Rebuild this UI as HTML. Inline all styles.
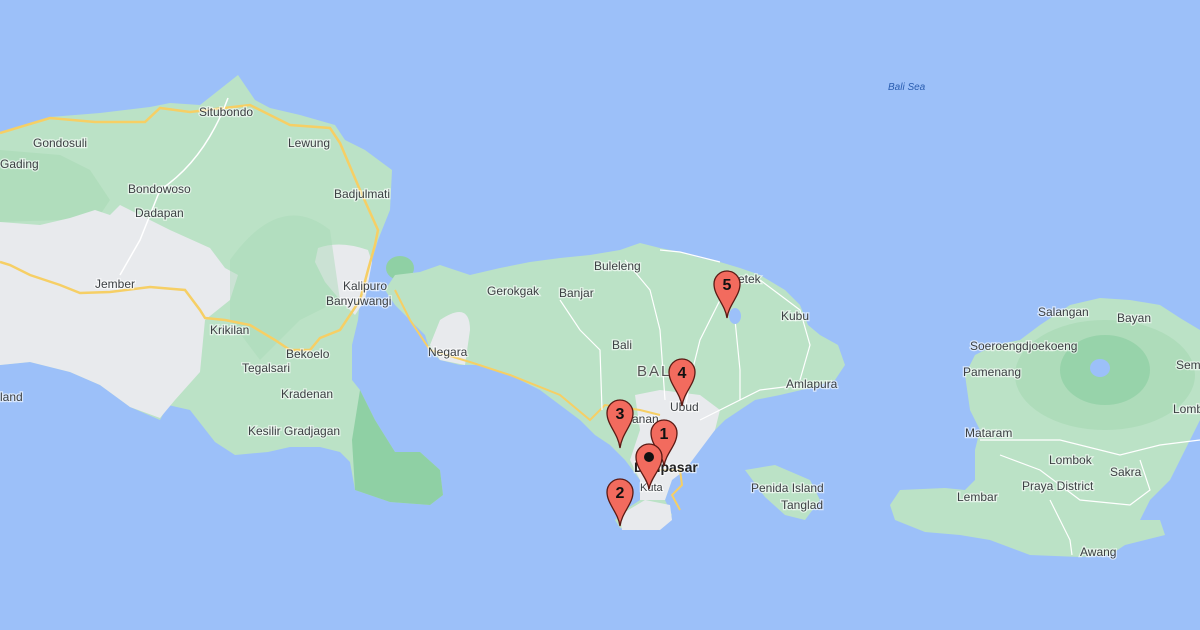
<!DOCTYPE html>
<html><head><meta charset="utf-8"><style>
html,body{margin:0;padding:0;width:1200px;height:630px;overflow:hidden;background:#9cc0f9}
svg{display:block}
text{font-family:"Liberation Sans",sans-serif;font-size:12px;fill:#3c4043;paint-order:stroke;stroke:#fff;stroke-width:2.5px;stroke-opacity:.6}
.pin text{font-weight:bold;font-size:16px;fill:#111;stroke:none}
</style></head><body>
<svg width="1200" height="630" viewBox="0 0 1200 630">
<rect width="1200" height="630" fill="#9cc0f9"/>
<!-- Java -->
<path d="M0,132 L50,117 100,113 150,107 170,103 200,105 238,75 255,100 270,108 300,115 335,125 345,140 365,150 392,170 390,210 378,240 372,260 368,280 360,300 358,320 352,345 352,380 360,390 375,420 395,452 420,452 440,470 443,495 430,505 390,502 355,490 350,462 340,452 320,447 290,447 268,452 235,455 215,442 190,410 168,405 160,420 130,407 100,385 70,372 30,362 0,365Z" fill="#bbe2c6"/>
<path d="M0,150 L60,155 90,170 110,200 100,215 60,220 0,222Z" fill="#a8dab5" opacity=".6"/>
<path d="M0,222 L40,225 70,218 95,210 110,215 120,205 140,215 170,230 210,248 225,268 238,275 230,300 205,320 200,372 175,400 160,418 130,407 100,385 70,372 30,362 0,365Z" fill="#e8eaed"/>
<path d="M318,248 Q340,240 368,250 L372,262 365,300 355,315 340,300 325,282 315,262Z" fill="#e8eaed"/>
<path d="M230,260 Q280,190 330,230 L340,300 300,320 260,360 230,320Z" fill="#a8dab5" opacity=".45"/>
<path d="M360,390 375,420 395,452 420,452 440,470 443,495 430,505 390,502 355,490 352,440Z" fill="#8fd0a4"/>
<ellipse cx="400" cy="268" rx="14" ry="12" fill="#8fd0a4"/>
<!-- roads Java -->
<path d="M0,133 L50,118 95,122 145,122 160,108 190,112 250,105 290,125 330,128 340,143 360,190 378,230 375,245 368,270 360,300 340,330 320,338 310,350 290,350 275,340 250,325 225,320 205,318 200,310 185,290 150,287 110,292 80,293 60,285 30,275 10,265 0,262" fill="none" stroke="#f6cf65" stroke-width="2.5"/>
<path d="M228,98 Q205,160 160,190 L140,240 120,275" fill="none" stroke="#fff" stroke-width="1.5"/>
<!-- Bali -->
<path d="M385,290 L395,275 420,272 440,265 470,275 500,268 530,262 560,258 590,255 620,250 640,243 660,248 680,252 700,258 720,262 740,268 760,275 785,290 800,305 808,325 820,335 838,345 845,365 835,380 810,388 780,395 755,400 725,420 705,440 690,455 680,470 672,480 665,500 672,515 665,525 640,530 620,528 615,520 625,510 640,500 640,480 625,460 610,445 595,435 580,420 560,405 540,390 510,375 480,365 460,365 440,360 430,350 425,335 410,320 395,305Z" fill="#bbe2c6"/>
<path d="M440,320 Q470,300 470,330 L465,365 440,360 430,345Z" fill="#e8eaed"/>
<path d="M635,395 L660,390 700,395 720,410 715,430 700,450 685,470 672,480 665,500 640,500 640,480 630,460 640,430Z" fill="#e8eaed"/>
<path d="M620,515 L645,500 670,505 672,520 660,530 622,530Z" fill="#e8eaed"/>
<path d="M395,290 L410,320 430,350 470,362 510,375 560,395 590,420 605,405 640,410 660,415" fill="none" stroke="#f6cf65" stroke-width="2"/>
<path d="M650,470 L680,470 682,485 672,495 680,510" fill="none" stroke="#f6cf65" stroke-width="2"/>
<g fill="none" stroke="#fff" stroke-width="1.2">
<path d="M560,300 L580,330 600,350 602,410"/><path d="M625,260 L650,290 660,330 665,400"/>
<path d="M730,270 L720,300 700,340 690,380 685,410"/><path d="M735,320 L740,370 740,400"/>
<path d="M760,280 L800,310 810,345 800,380"/><path d="M660,250 L680,252 720,262"/>
<path d="M700,420 L760,390 800,385"/>
</g>
<ellipse cx="735" cy="316" rx="6" ry="8" fill="#9cc0f9"/>
<!-- Penida -->
<path d="M745,470 L775,465 810,480 820,500 805,520 785,515 765,497Z" fill="#bbe2c6"/>
<!-- Lombok -->
<path d="M1200,330 L1180,318 1160,305 1130,300 1100,298 1070,305 1040,325 1020,340 995,345 975,355 965,375 970,410 980,430 975,450 975,480 965,490 945,488 900,490 890,505 895,520 925,532 960,535 990,540 1030,555 1080,557 1110,555 1125,545 1145,540 1165,535 1160,520 1140,520 1150,500 1170,480 1190,440 1200,420Z" fill="#bbe2c6"/>
<ellipse cx="1105" cy="375" rx="90" ry="55" fill="#a8dab5" opacity=".7"/>
<ellipse cx="1105" cy="370" rx="45" ry="35" fill="#97d3aa"/>
<ellipse cx="1100" cy="368" rx="10" ry="9" fill="#9cc0f9"/>
<g fill="none" stroke="#fff" stroke-width="1.2">
<path d="M980,440 L1060,440 1120,455 1160,445 1200,440"/><path d="M1000,455 L1040,470 1080,500 1130,505 1150,490 1140,460"/>
<path d="M1050,500 L1070,540 1072,555"/>
</g>
<!-- labels -->
<text x="33" y="147">Gondosuli</text><text x="0" y="168">Gading</text>
<text x="199" y="116">Situbondo</text><text x="288" y="147">Lewung</text>
<text x="128" y="193">Bondowoso</text><text x="135" y="217">Dadapan</text>
<text x="334" y="198">Badjulmati</text><text x="95" y="288">Jember</text>
<text x="343" y="290">Kalipuro</text><text x="326" y="305">Banyuwangi</text>
<text x="210" y="334">Krikilan</text><text x="286" y="358">Bekoelo</text>
<text x="242" y="372">Tegalsari</text><text x="281" y="398">Kradenan</text>
<text x="248" y="435">Kesilir Gradjagan</text><text x="0" y="401">land</text>
<text x="428" y="356">Negara</text><text x="487" y="295">Gerokgak</text>
<text x="559" y="297">Banjar</text><text x="594" y="270">Buleleng</text>
<text x="612" y="349">Bali</text><text x="637" y="376" style="font-size:15px;letter-spacing:2px;fill:#555">BALI</text>
<text x="670" y="411">Ubud</text><text x="632" y="423">anan</text>
<text x="634" y="472" style="font-size:14px;font-weight:bold;fill:#222">Denpasar</text>
<text x="640" y="491" style="font-size:11px">Kuta</text>
<text x="738" y="283">etek</text><text x="781" y="320">Kubu</text>
<text x="786" y="388">Amlapura</text><text x="751" y="492">Penida Island</text>
<text x="781" y="509">Tanglad</text>
<text x="888" y="90" style="font-size:10px;font-style:italic;fill:#2a5db0;stroke:none">Bali Sea</text>
<text x="1038" y="316">Salangan</text><text x="1117" y="322">Bayan</text>
<text x="970" y="350">Soeroengdjoekoeng</text><text x="963" y="376">Pamenang</text>
<text x="1176" y="369">Sem</text><text x="1173" y="413">Lomb</text>
<text x="965" y="437">Mataram</text><text x="1049" y="464">Lombok</text>
<text x="1110" y="476">Sakra</text><text x="1022" y="490">Praya District</text>
<text x="957" y="501">Lembar</text><text x="1080" y="556">Awang</text>
<!-- pins -->
<g class="pin" fill="#f26b5e" stroke="#5a1a14" stroke-width="1.3">
<g transform="translate(664,433)"><path d="M0,33 C-2,20 -13,12 -13,0 A13,13 0 1 1 13,0 C13,12 2,20 0,33Z"/><text x="0" y="6" text-anchor="middle">1</text></g>
<g transform="translate(620,492)"><path d="M0,34 C-2,20 -13,12 -13,0 A13,13 0 1 1 13,0 C13,12 2,20 0,34Z"/><text x="0" y="6" text-anchor="middle">2</text></g>
<g transform="translate(620,413)"><path d="M0,35 C-2,20 -13,12 -13,0 A13,13 0 1 1 13,0 C13,12 2,20 0,35Z"/><text x="0" y="6" text-anchor="middle">3</text></g>
<g transform="translate(682,372)"><path d="M0,34 C-2,20 -13,12 -13,0 A13,13 0 1 1 13,0 C13,12 2,20 0,34Z"/><text x="0" y="6" text-anchor="middle">4</text></g>
<g transform="translate(727,284)"><path d="M0,34 C-2,20 -13,12 -13,0 A13,13 0 1 1 13,0 C13,12 2,20 0,34Z"/><text x="0" y="6" text-anchor="middle">5</text></g>
<g transform="translate(649,457)"><path d="M0,32 C-2,20 -13,12 -13,0 A13,13 0 1 1 13,0 C13,12 2,20 0,32Z"/><circle cx="0" cy="0" r="5" fill="#111" stroke="none"/></g>
</g>
</svg>
</body></html>
